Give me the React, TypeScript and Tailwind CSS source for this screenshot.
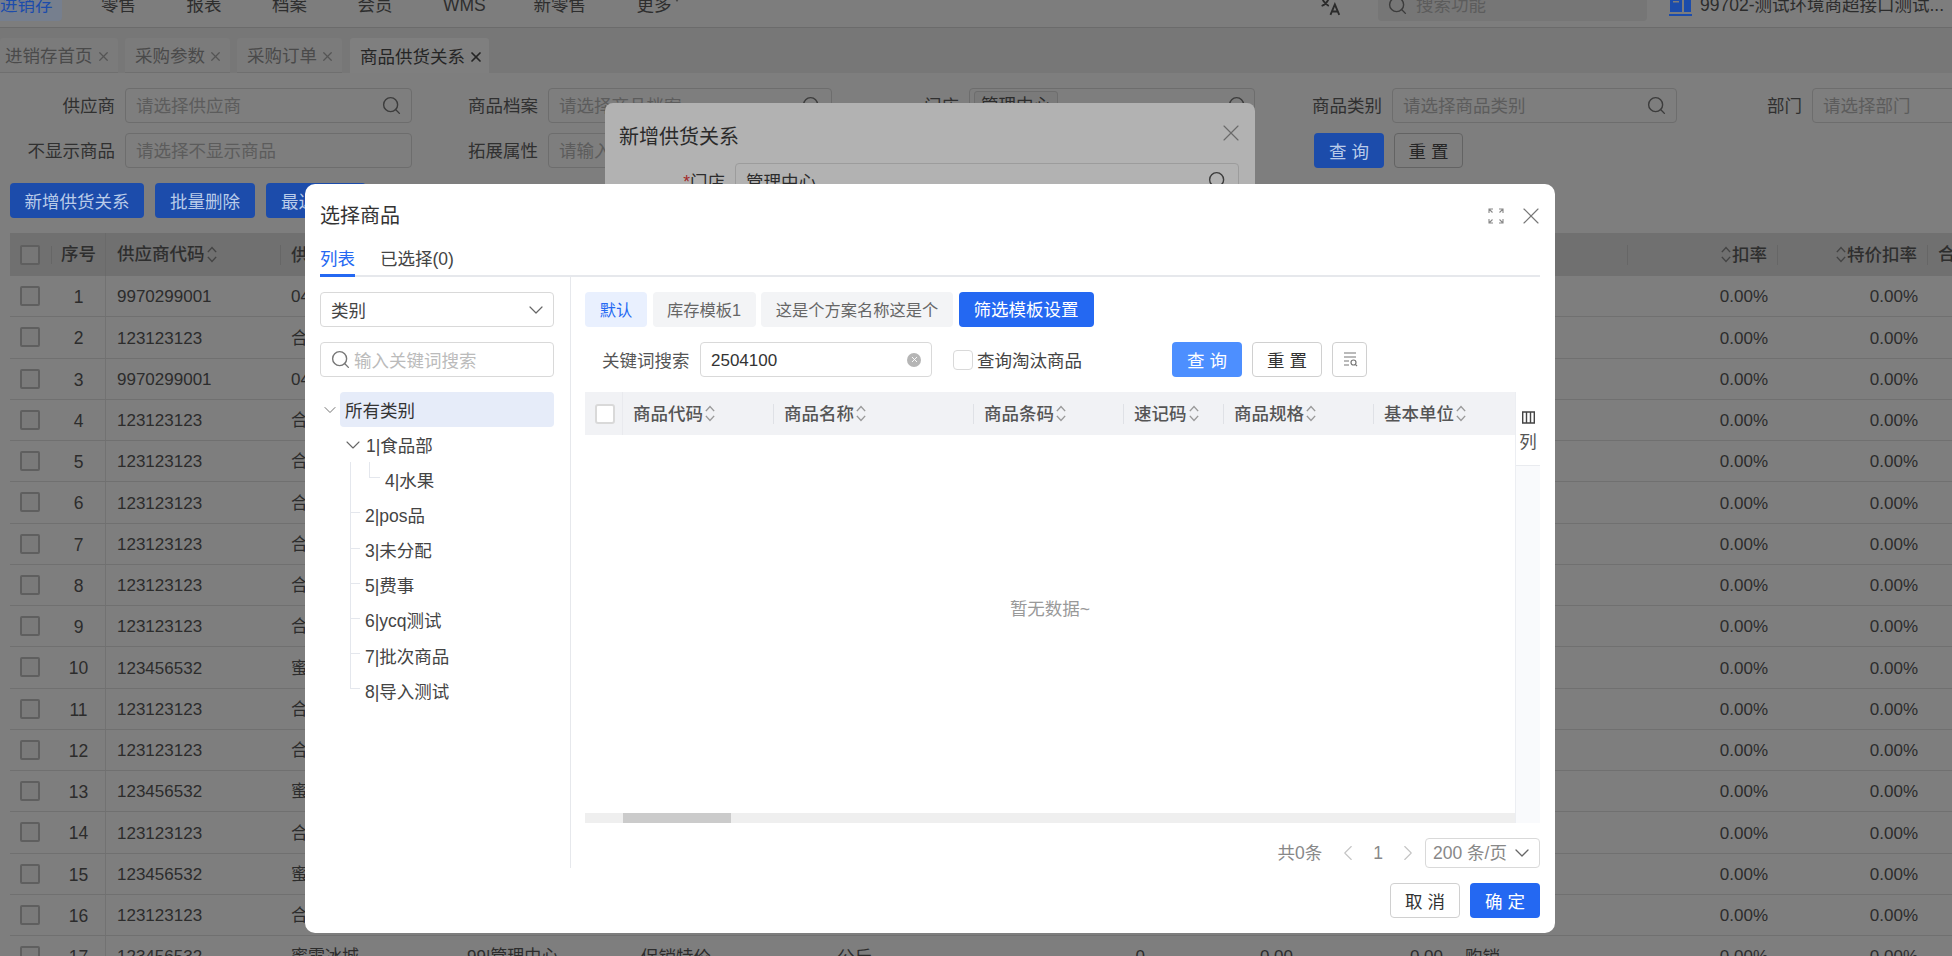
import { ChevronDown, ChevronLeft, ChevronRight, Search, X } from "lucide-react"

const navItems = ["零售", "报表", "档案", "会员"]
const pageTabs = ["进销存首页", "采购参数", "采购订单"]
const pageColumns = "grid grid-cols-[42px_54px_174px_176px_174px_196px_204px_126px_148px_150px_174px_150px_150px_24px]"

const rows = [
    ["9970299001", "04"],
    ["123123123", "合"],
    ["9970299001", "04"],
    ["123123123", "合"],
    ["123123123", "合"],
    ["123123123", "合"],
    ["123123123", "合"],
    ["123123123", "合"],
    ["123123123", "合"],
    ["123456532", "蜜"],
    ["123123123", "合"],
    ["123123123", "合"],
    ["123456532", "蜜"],
    ["123123123", "合"],
    ["123456532", "蜜"],
    ["123123123", "合"],
    ["123456532", "蜜雪冰城"],
]

const treeItems = [
    { label: "2|pos品" },
    { label: "3|未分配" },
    { label: "5|费事" },
    { label: "6|ycq测试" },
    { label: "7|批次商品" },
    { label: "8|导入测试" },
]

const goodsColumns = [
    { label: "商品代码", width: "w-[150px]" },
    { label: "商品名称", width: "w-[200px]" },
    { label: "商品条码", width: "w-[150px]" },
    { label: "速记码", width: "w-[100px]" },
    { label: "商品规格", width: "w-[150px]" },
    { label: "基本单位", width: "w-[142px]" },
]

function SortIcon({ color = "#9a9a9a" }: { color?: string }) {
    return (
        <svg width="12" height="19" viewBox="0 0 10 16" fill="none" stroke={color} strokeWidth="1.2" className="shrink-0">
            <path d="M1.500 6 5 2.200 8.500 6" />
            <path d="M1.500 10 5 13.800 8.500 10" />
        </svg>
    )
}

function PageInput({ placeholder, icon = true }: { placeholder: string; icon?: boolean }) {
    return (
        <div className="flex h-[35px] items-center justify-between rounded-[4px] border border-[#6d6d6d] pl-[10px] pr-[9px]">
            <span className="pt-[2px] text-[#5c5c5c]">{placeholder}</span>
            {icon && <Search size={21} strokeWidth={1.6} color="#3c3c3c" />}
        </div>
    )
}

function FieldLabel({ children }: { children: string }) {
    return <div className="flex h-[35px] items-center justify-end pr-[10px] pt-[2px] text-[#303030]">{children}</div>
}

function PageBackground() {
    return (
        <>
            <div className="h-[28px] overflow-hidden border-b border-[#6b6b6b] bg-[#7d7d7d]">
                <div className="-mt-[10px] flex h-[31px] items-center">
                    <div className="mr-[39px] w-[62px] rounded-br-[4px] bg-[#767f8e] leading-[31px] text-[#1c4cab]">进销存</div>
                    <div className="flex items-center gap-[50.5px] text-[#2e2e2e]">
                        {navItems.map((item) => (
                            <span key={item}>{item}</span>
                        ))}
                        <span className="w-[40px]">WMS</span>
                        <span>新零售</span>
                        <span className="flex items-start">
                            更多
                            <span className="mt-[4px] ml-[1px] h-0 w-0 border-x-[4px] border-t-[6px] border-x-transparent border-t-[#444]" />
                        </span>
                    </div>
                    <div className="ml-auto flex items-center">
                        <svg width="22" height="22" viewBox="0 0 20 20" fill="none" stroke="#2b2b2b" strokeWidth="1.700">
                            <path d="M1 3h8M5 1v2M8 3C7 6 4 9 1.500 10M2.500 4.500C4 7 6 9 8 10" />
                            <path d="M9.500 18 13.500 8.500 17.500 18M11 15h5" />
                        </svg>
                        <div className="ml-[36px] flex h-[31px] w-[269px] items-center rounded-[4px] bg-[#767676] pl-[9px]">
                            <Search size={21} strokeWidth={1.6} color="#3c3c3c" />
                            <span className="ml-[8px] text-[#5c5c5c]">搜索功能</span>
                        </div>
                        <svg width="23" height="24" viewBox="0 0 23 24" className="ml-[22px] mt-[-4px]" fill="#1c4cab">
                            <path d="M1 0h12v20H1zM15 8h7v12h-7zM0 22h23v2H0z" />
                            <path d="M4 5h6v1.500H4zM4 9h6v1.500H4z" fill="#7d7d7d" />
                        </svg>
                        <span className="ml-[8px] w-[252px] truncate text-[#2c2c2c]">99702-测试环境商超接口测试...</span>
                    </div>
                </div>
            </div>

            <div className="flex h-[45px] items-end gap-[7px] bg-[#777777]">
                {pageTabs.map((tab, i) => (
                    <div
                        key={tab}
                        className={
                            "flex h-[35px] items-center rounded-t-[3px] border-b border-[#6f6f6f] bg-[#7b7b7b] pt-[3px] text-[#4a4a4a] " +
                            (i === 0 ? "w-[118px] pl-[5px]" : "w-[105px] pl-[10px]")
                        }
                    >
                        <span className="mr-[3px]">{tab}</span>
                        <X size={15} strokeWidth={2} color="#555" />
                    </div>
                ))}
                <div className="ml-[1px] flex h-[35px] w-[139px] items-center rounded-t-[3px] bg-[#7f7f7f] pl-[10px] pt-[3px] text-[#252525]">
                    <span className="mr-[3px]">商品供货关系</span>
                    <X size={16} strokeWidth={2.6} color="#252525" />
                </div>
            </div>

            <div className="grid grid-cols-[125px_287px_136px_284px_137px_286px_137px_285px_135px_140px] gap-y-[10px] pt-[15px]">
                <FieldLabel>供应商</FieldLabel>
                <PageInput placeholder="请选择供应商" />
                <FieldLabel>商品档案</FieldLabel>
                <PageInput placeholder="请选择商品档案" />
                <FieldLabel>门店</FieldLabel>
                <div className="flex h-[35px] items-center rounded-[4px] border border-[#6d6d6d] pl-[4px] pr-[6px]">
                    <span className="rounded-[3px] border border-[#6d6d6d] bg-[#7a7a7a] px-[6px] text-[#2c2c2c]">管理中心</span>
                    <Search size={21} strokeWidth={1.6} color="#3c3c3c" className="ml-auto" />
                </div>
                <FieldLabel>商品类别</FieldLabel>
                <PageInput placeholder="请选择商品类别" />
                <FieldLabel>部门</FieldLabel>
                <div className="-mr-[8px]">
                    <PageInput placeholder="请选择部门" icon={false} />
                </div>

                <FieldLabel>不显示商品</FieldLabel>
                <PageInput placeholder="请选择不显示商品" icon={false} />
                <FieldLabel>拓展属性</FieldLabel>
                <PageInput placeholder="请输入拓展属性" icon={false} />
                <div className="col-start-7 col-span-2 flex gap-[10px] pl-[59px]">
                    <div className="flex h-[35px] w-[70px] items-center justify-center rounded-[4px] bg-[#1c4cab] pt-[3px] text-[#b9cbe9]">查 询</div>
                    <div className="flex h-[35px] w-[69px] items-center justify-center rounded-[4px] border border-[#636363] pt-[3px] text-[#262626]">重 置</div>
                </div>
            </div>

            <div className="flex gap-[11px] pl-[10px] pt-[15px] text-[#b9cbe9]">
                <div className="flex h-[35px] w-[134px] items-center justify-center rounded-[4px] bg-[#1c4cab] pt-[3px]">新增供货关系</div>
                <div className="flex h-[35px] w-[100px] items-center justify-center rounded-[4px] bg-[#1c4cab] pt-[3px]">批量删除</div>
                <div className="flex h-[35px] w-[100px] items-center rounded-[4px] bg-[#1c4cab] pl-[15px] pt-[3px]">最近</div>
            </div>

            <div className="mt-[15px] pl-[10px]">
                <div className={pageColumns + " h-[43px] items-center bg-[#707070] font-medium text-[#2e2e2e]"}>
                    <div className="flex h-[20px] items-center justify-between pl-[10px]">
                        <span className="h-[20px] w-[20px] rounded-[2px] border-2 border-[#5f5f5f] bg-[#777]" />
                        <span className="h-[18px] w-px bg-[#666]" />
                    </div>
                    <div className="flex h-full items-center justify-center border-r border-[#6a6a6a]">序号</div>
                    <div className="flex items-center gap-[1px] pl-[11px]">
                        供应商代码
                        <SortIcon color="#444" />
                    </div>
                    <div className="border-l border-[#666] pl-[10px] leading-[20px]">供</div>
                    <div />
                    <div />
                    <div />
                    <div />
                    <div />
                    <div />
                    <div className="h-[20px] border-r border-[#666]" />
                    <div className="flex items-center justify-end border-r border-[#666] pr-[10px] leading-[20px]">
                        <SortIcon color="#444" />
                        扣率
                    </div>
                    <div className="flex items-center justify-end border-r border-[#666] pr-[10px] leading-[20px]">
                        <SortIcon color="#444" />
                        特价扣率
                    </div>
                    <div className="pl-[10px] whitespace-nowrap">合</div>
                </div>
                {rows.map((row, i) => (
                    <div key={i} className={pageColumns + " h-[41.25px] items-center border-b border-[#707070] text-[#2c2c2c]"}>
                        <div className="pl-[10px]">
                            <div className="h-[20px] w-[20px] rounded-[2px] border-2 border-[#5f5f5f] bg-[#7a7a7a]" />
                        </div>
                        <div className="flex h-full items-center justify-center border-r border-[#727272] pt-[2px]">{i + 1}</div>
                        <div className="pl-[11px] pt-[2px] text-[17px]">{row[0]}</div>
                        <div className="pl-[11px] pt-[2px] text-[17px]">{row[1]}</div>
                        <div className="pl-[11px] pt-[2px] text-[17px]">{i === 16 ? "99|管理中心" : ""}</div>
                        <div className="pl-[11px] pt-[2px]">{i === 16 ? "促销特价" : ""}</div>
                        <div className="pl-[11px] pt-[2px]">{i === 16 ? "公斤" : ""}</div>
                        <div className="pr-[11px] pt-[2px] text-right text-[17px]">{i === 16 ? "0" : ""}</div>
                        <div className="pr-[11px] pt-[2px] text-right text-[17px]">{i === 16 ? "0.00" : ""}</div>
                        <div className="pr-[11px] pt-[2px] text-right text-[17px]">{i === 16 ? "0.00" : ""}</div>
                        <div className="pl-[11px] pt-[2px]">{i === 16 ? "购销" : ""}</div>
                        <div className="pr-[10px] pt-[2px] text-right text-[17px]">0.00%</div>
                        <div className="pr-[10px] pt-[2px] text-right text-[17px]">0.00%</div>
                        <div />
                    </div>
                ))}
            </div>
        </>
    )
}

function AddRelationModal() {
    return (
        <div className="absolute left-[605px] top-[103px] h-[700px] w-[650px] rounded-[8px] bg-[#b2b2b2] px-[14px]">
            <div className="flex h-[60px] items-center justify-between">
                <span className="pt-[8px] text-[20px] text-[#2a2a2a]">新增供货关系</span>
                <X size={28} strokeWidth={1} color="#6a6a6a" className="-mr-[4px]" />
            </div>
            <div className="flex items-center">
                <span className="w-[116px] pr-[10px] pt-[3px] text-right text-[#2c2c2c]">
                    <span className="text-[#a32a2a]">*</span>门店
                </span>
                <div className="flex h-[35px] w-[504px] items-center justify-between rounded-[4px] border border-[#9c9c9c] pl-[10px] pr-[10px] text-[#2c2c2c]">
                    <span className="pt-[3px]">管理中心</span>
                    <Search size={21} strokeWidth={1.6} color="#3c3c3c" />
                </div>
            </div>
        </div>
    )
}

function GoodsTree() {
    return (
        <div className="mt-[15px] text-[#444]">
            <div className="flex h-[35px] items-center">
                <div className="flex w-[20px] justify-center">
                    <ChevronDown size={24} strokeWidth={1.1} color="#666" />
                </div>
                <div className="flex h-[35px] flex-1 items-center rounded-[4px] bg-[#e6ecf9] pl-[5px] pt-[3px] text-[#333]">所有类别</div>
            </div>
            <div className="flex h-[35.2px] items-center pl-[20px]">
                <div className="flex w-[26px] justify-center">
                    <ChevronDown size={24} strokeWidth={1.1} color="#666" />
                </div>
                <span className="pt-[3px]">1|食品部</span>
            </div>
            <div className="relative">
                <span className="absolute left-[30px] top-0 h-[226px] w-px bg-[#e4e7ed]" />
                <div className="relative flex h-[35.2px] items-center pl-[65px] pt-[2px]">
                    <span className="absolute left-[49px] top-0 h-[16px] w-[11px] border-b border-l border-[#e4e7ed]" />
                    4|水果
                </div>
                {treeItems.map((item) => (
                    <div key={item.label} className="relative flex h-[35.2px] items-center pl-[45px] pt-[2px]">
                        <span className="absolute left-[30px] top-[15px] h-px w-[10px] bg-[#e4e7ed]" />
                        {item.label}
                    </div>
                ))}
            </div>
        </div>
    )
}

function GoodsTable() {
    return (
        <div className="mt-[15px] flex h-[431px]">
            <div className="flex w-[930px] flex-col">
                <div className="flex h-[43px] items-center bg-[#f1f2f5] font-medium text-[#555]">
                    <div className="flex h-full w-[38px] items-center border-r border-[#e9eaee] pl-[10px]">
                        <span className="h-[20px] w-[20px] rounded-[3px] border-2 border-[#d9d9d9] bg-white" />
                    </div>
                    {goodsColumns.map((col, i) => (
                        <div
                            key={col.label}
                            className={col.width + " flex items-center gap-[1px] pl-[10px] leading-[20px] " + (i > 0 ? "border-l border-[#dfe1e6]" : "")}
                        >
                            {col.label}
                            <SortIcon />
                        </div>
                    ))}
                </div>
                <div className="flex flex-1 items-center justify-center pb-[30px] text-[#999]">暂无数据~</div>
                <div className="h-[10px] bg-[#efefef] pl-[38px]">
                    <div className="h-[10px] w-[108px] bg-[#cbcbcb]" />
                </div>
            </div>
            <div className="w-[25px] border-l border-[#eceef2] bg-[#f9fafc]">
                <div className="flex h-[74px] flex-col items-center border-b border-[#e9ebef] bg-white pt-[19px] text-[#555]">
                    <svg width="13" height="13" viewBox="0 0 13 13" fill="none" stroke="#444" strokeWidth="1.400">
                        <path d="M.700 1h11.600v11H.700zM4.500 1v11M8.500 1v11" />
                    </svg>
                    <span className="mt-[5px]">列</span>
                </div>
            </div>
        </div>
    )
}

function SelectGoodsModal() {
    return (
        <div className="absolute left-[305px] top-[184px] h-[749px] w-[1250px] rounded-[10px] bg-white px-[15px]">
            <div className="flex h-[64px] items-center justify-between">
                <span className="text-[20px] text-[#333]">选择商品</span>
                <div className="flex items-center gap-[13px]">
                    <svg width="16" height="16" viewBox="0 0 16 16" fill="none" stroke="#888" strokeWidth="1.100">
                        <path d="M1 5V1h4M1 1l3.500 3.500M11 1h4v4M15 1l-3.500 3.500M1 11v4h4M1 15l3.500-3.500M15 11v4h-4M15 15l-3.500-3.500" />
                    </svg>
                    <X size={28} strokeWidth={1} color="#777" className="-mr-[5px]" />
                </div>
            </div>

            <div className="flex h-[29px] items-start gap-[25px] border-b-2 border-[#e6e8ec]">
                <div className="h-[29px] border-b-[3px] border-[#2468f2] leading-[22px] text-[#2468f2]">列表</div>
                <div className="leading-[22px] text-[#444]">已选择(0)</div>
            </div>

            <div className="flex h-[591px]">
                <div className="w-[251px] border-r border-[#e6e8ec] pr-[16px] pt-[15px]">
                    <div className="flex h-[35px] items-center justify-between rounded-[4px] border border-[#d9d9d9] pl-[10px] pr-[5px] text-[#444]">
                        <span className="pt-[3px]">类别</span>
                        <ChevronDown size={24} strokeWidth={1.2} color="#666" />
                    </div>
                    <div className="mt-[15px] flex h-[35px] items-center rounded-[4px] border border-[#d9d9d9] pl-[9px] text-[#bbb]">
                        <Search size={21} strokeWidth={1.6} color="#777" />
                        <span className="ml-[3px] pt-[3px]">输入关键词搜索</span>
                    </div>
                    <GoodsTree />
                </div>

                <div className="w-[969px] pl-[14px] pt-[15px]">
                    <div className="flex h-[35px] gap-[5.5px] text-[16.25px] text-[#666]">
                        <div className="flex w-[62px] items-center justify-center rounded-[4px] bg-[#e9f0fe] pt-[2px] text-[#2468f2]">默认</div>
                        <div className="flex w-[103px] items-center justify-center rounded-[4px] bg-[#f3f4f6] pt-[2px]">库存模板1</div>
                        <div className="flex w-[192px] items-center justify-center rounded-[4px] bg-[#f3f4f6] pt-[2px]">这是个方案名称这是个</div>
                        <div className="flex w-[135px] items-center justify-center rounded-[4px] bg-[#2468f2] pt-[2px] text-[17.5px] text-white">筛选模板设置</div>
                    </div>

                    <div className="mt-[15px] flex h-[35px] items-center">
                        <span className="ml-[17px] w-[98px] pt-[3px] text-[#555]">关键词搜索</span>
                        <div className="flex h-[35px] w-[232px] items-center justify-between rounded-[4px] border border-[#d9d9d9] pl-[10px] pr-[10px] text-[17px] text-[#333]">
                            <span className="pt-[3px]">2504100</span>
                            <span className="flex h-[14px] w-[14px] items-center justify-center rounded-full bg-[#b5b5b5]">
                                <X size={9} strokeWidth={2.4} color="#fff" />
                            </span>
                        </div>
                        <span className="ml-[21px] h-[20px] w-[20px] rounded-[4px] border border-[#d9d9d9]" />
                        <span className="ml-[4px] w-[195px] pt-[3px] text-[#444]">查询淘汰商品</span>
                        <div className="flex h-[35px] w-[70px] items-center justify-center rounded-[4px] bg-[#4d8fff] pt-[3px] text-white">查 询</div>
                        <div className="ml-[10px] flex h-[35px] w-[70px] items-center justify-center rounded-[4px] border border-[#d0d0d0] pt-[3px] text-[#333]">重 置</div>
                        <div className="ml-[10px] flex h-[35px] w-[35px] items-center justify-center rounded-[4px] border border-[#d0d0d0]">
                            <svg width="16" height="17" viewBox="0 0 16 17" fill="none" stroke="#777" strokeWidth="1.200">
                                <path d="M2 2h12M2 6h12M2 10h5M2 14h5" />
                                <circle cx="11.500" cy="11.500" r="2.500" />
                                <path d="M13.300 13.300 15 15" />
                            </svg>
                        </div>
                    </div>

                    <GoodsTable />

                    <div className="mt-[15px] flex h-[30px] items-center text-[#888]">
                        <span className="ml-auto">共0条</span>
                        <ChevronLeft size={26} strokeWidth={1} color="#c4c4c4" className="ml-[13px]" />
                        <span className="ml-[12px] text-[#888]">1</span>
                        <ChevronRight size={26} strokeWidth={1} color="#c4c4c4" className="ml-[12px]" />
                        <div className="ml-[4px] flex h-[30px] w-[115px] items-center justify-between rounded-[4px] border border-[#d9d9d9] pl-[7px] pr-[5px]">
                            200 条/页
                            <ChevronDown size={24} strokeWidth={1.3} color="#666" />
                        </div>
                    </div>
                </div>
            </div>

            <div className="flex justify-end gap-[10px] pt-[15px]">
                <div className="flex h-[35px] w-[70px] items-center justify-center rounded-[4px] border border-[#d0d0d0] pt-[3px] text-[#333]">取 消</div>
                <div className="flex h-[35px] w-[70px] items-center justify-center rounded-[4px] bg-[#2468f2] pt-[3px] text-white">确 定</div>
            </div>
        </div>
    )
}

export default function App() {
    return (
        <div className="relative h-[956px] w-[1952px] overflow-hidden bg-[#7e7e7e] font-['Liberation_Sans','Noto_Sans_CJK_SC',sans-serif] text-[17.5px]">
            <PageBackground />
            <AddRelationModal />
            <SelectGoodsModal />
        </div>
    )
}
